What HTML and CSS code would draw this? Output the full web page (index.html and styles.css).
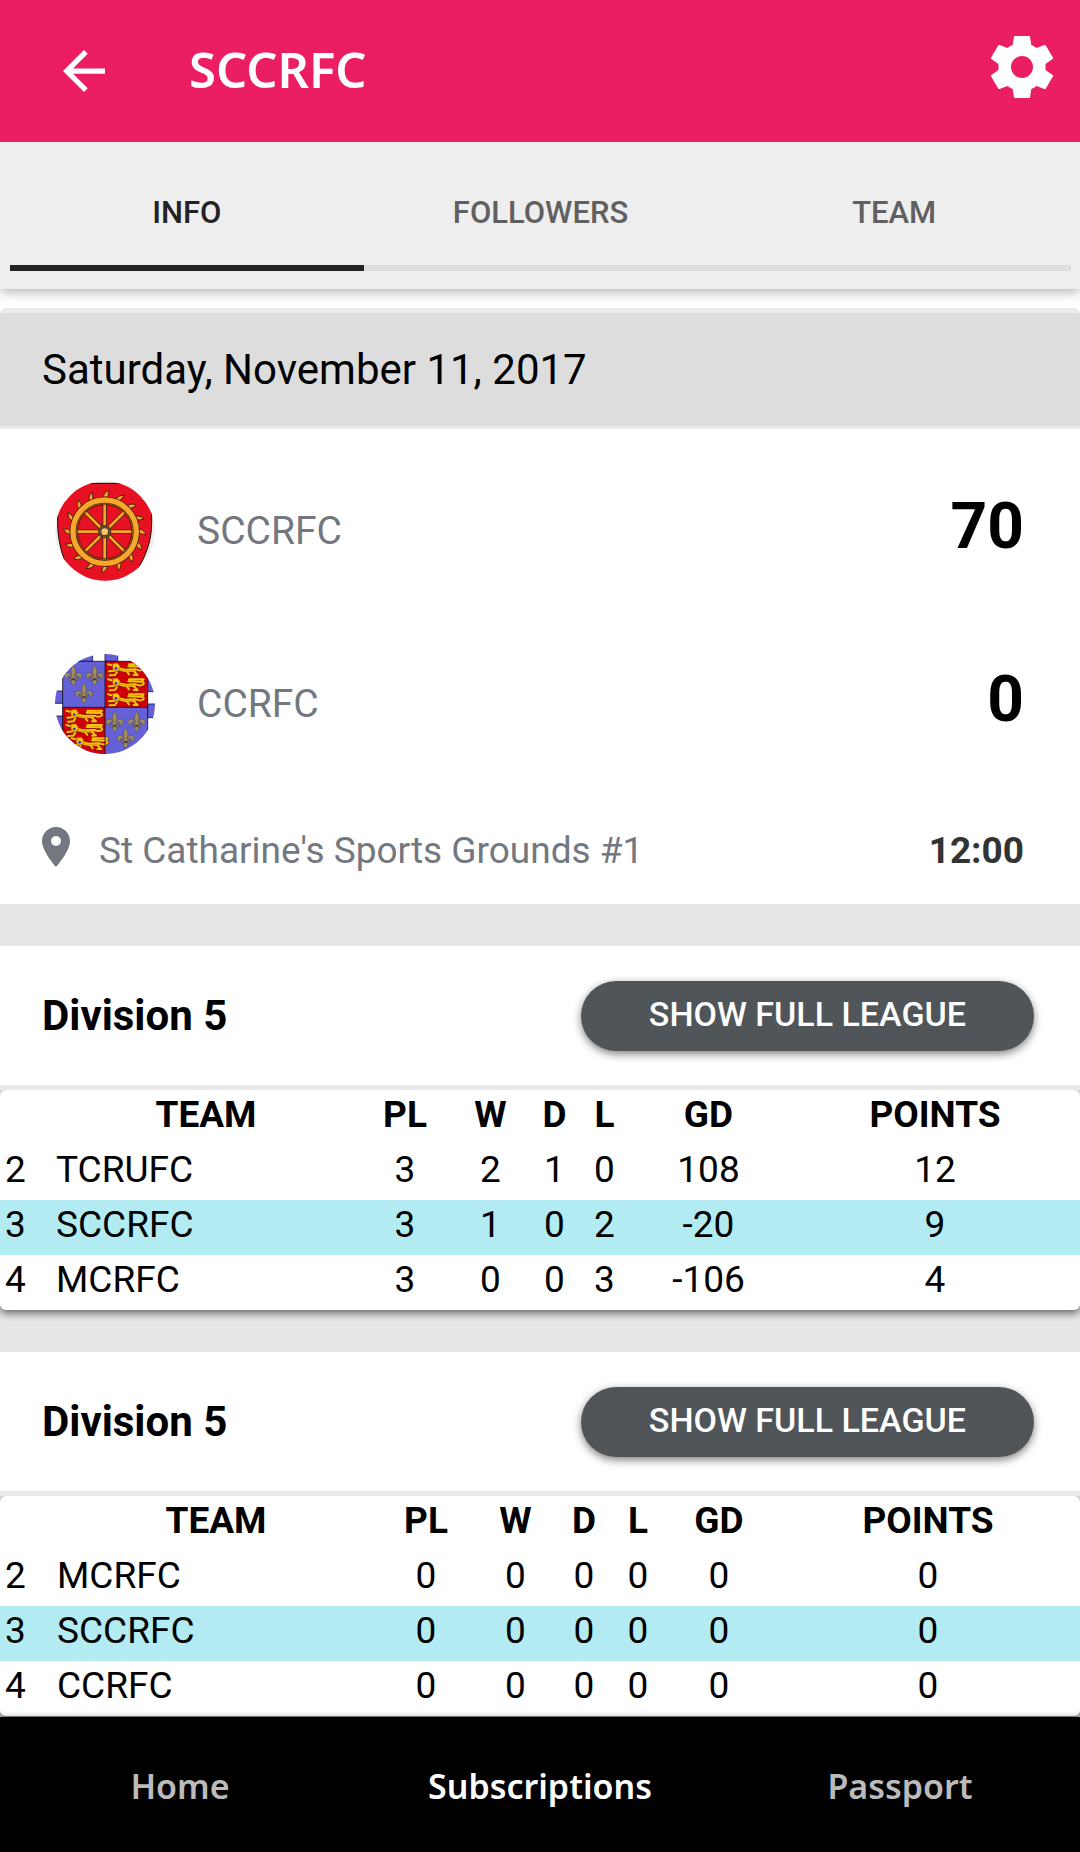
FILE: index.html
```html
<!DOCTYPE html>
<html lang="en">
<head>
<meta charset="utf-8">
<meta name="viewport" content="width=device-width, initial-scale=1">
<title>SCCRFC</title>
<link rel="stylesheet" href="styles.css">
</head>
<body>
<header class="topbar">
  <button class="icon-button" type="button" aria-label="Back">
    <svg class="icon-back" viewBox="4 4 16 16" aria-hidden="true"><path d="M20 11H7.83l5.59-5.59L12 4l-8 8 8 8 1.41-1.41L7.83 13H20z"/></svg>
  </button>
  <h1 class="topbar-title">SCCRFC</h1>
  <button class="icon-button" type="button" aria-label="Settings">
    <svg class="icon-gear" viewBox="-31 -31 62 62" aria-hidden="true"><path fill-rule="evenodd" d="M-7.3-31H7.3Q8-31 8.1-30L9.3-22Q12-21 14.5-19L22.4-22Q23.3-22.300 23.800-21.500L31-9.200Q31.300-8.400 30.600-7.900L23.500-3V3L30.600 7.900Q31.300 8.400 31 9.200L23.800 21.500Q23.300 22.300 22.400 22L14.500 19Q12 21 9.300 22L8.100 30Q8 31 7.300 31H-7.300Q-8 31-8.100 30L-9.300 22Q-12 21-14.500 19L-22.400 22Q-23.300 22.300-23.800 21.500L-31 9.200Q-31.300 8.400-30.600 7.900L-23.500 3V-3L-30.600-7.900Q-31.300-8.400-31-9.200L-23.800-21.500Q-23.300-22.300-22.400-22L-14.500-19Q-12-21-9.300-22L-8.100-30Q-8-31-7.300-31ZM0-11A11 11 0 1 0 0 11A11 11 0 1 0 0-11Z"/></svg>
  </button>
</header>

<div class="tabs" role="tablist">
  <button class="tab tab-active" type="button" role="tab" aria-selected="true">INFO</button>
  <button class="tab" type="button" role="tab" aria-selected="false">FOLLOWERS</button>
  <button class="tab" type="button" role="tab" aria-selected="false">TEAM</button>
</div>

<main class="content">
  <section class="fixture">
    <h2 class="fixture-date">Saturday, November 11, 2017</h2>
    <div class="fixture-body">
      <div class="side">
        <svg class="crest" viewBox="45 63 300 300" aria-hidden="true">
          <defs>
            <clipPath id="round1"><circle cx="195" cy="213" r="149"/></clipPath>
            <path id="flame" d="M-9-104C-5-112-3-120 10-123C5-116 10-111 3-104Z" fill="#f9a72b" stroke="#3a1d08" stroke-width="2.500"/>
          </defs>
          <g clip-path="url(#round1)">
            <path fill="#ececec" d="M45 63h300v300H45z"/>
            <path fill="#e81123" stroke="#1c0606" stroke-width="3" d="M53 70H335V190C335 240 318 290 288 335V370H105C72 310 53 250 53 190Z"/>
            <g transform="translate(194 215)">
              <use href="#flame" transform="rotate(2)"/><use href="#flame" transform="rotate(24)"/><use href="#flame" transform="rotate(46)"/><use href="#flame" transform="rotate(68)"/>
              <use href="#flame" transform="rotate(90)"/><use href="#flame" transform="rotate(112)"/><use href="#flame" transform="rotate(134)"/><use href="#flame" transform="rotate(157)"/>
              <use href="#flame" transform="rotate(180)"/><use href="#flame" transform="rotate(202)"/><use href="#flame" transform="rotate(225)"/><use href="#flame" transform="rotate(248)"/>
              <use href="#flame" transform="rotate(270)"/><use href="#flame" transform="rotate(293)"/><use href="#flame" transform="rotate(316)"/><use href="#flame" transform="rotate(338)"/>
              <path stroke="#4a2708" stroke-width="13" d="M0-84V84M-84 0H84M-59-59L59 59M59-59L-59 59"/>
              <path stroke="#f9a72b" stroke-width="8" d="M0-84V84M-84 0H84M-59-59L59 59M59-59L-59 59"/>
              <circle r="94" fill="none" stroke="#3a1d08" stroke-width="22"/>
              <circle r="95" fill="none" stroke="#f9a72b" stroke-width="16"/>
              <circle r="84" fill="none" stroke="#b5761d" stroke-width="2"/>
              <circle r="81" fill="none" stroke="#3a1d08" stroke-width="2"/>
              <circle r="20" fill="#4b3b26"/>
              <circle r="15" fill="none" stroke="#86683c" stroke-width="2"/>
              <circle r="10" fill="#fec368"/>
            </g>
          </g>
        </svg>
        <span class="side-name">SCCRFC</span>
        <strong class="side-score">70</strong>
      </div>
      <div class="side">
        <svg class="crest" viewBox="45 42 300 300" aria-hidden="true">
          <defs>
            <clipPath id="round2"><circle cx="195" cy="192" r="150"/></clipPath>
            <g id="fleur">
              <path fill="#a18c62" stroke="#4a4234" stroke-width="1.500" d="M0-30C10-18 7-8 4 4C8-12 24-11 26 1C26 9 18 11 14 6C17 5 16 0 12 1C7 3 7 7 6 9H12V15H5C6 20 8 22 4 26L0 30L-4 26C-8 22-6 20-5 15H-12V9H-6C-7 7-7 3-12 1C-16 0-17 5-14 6C-18 11-26 9-26 1C-24-11-8-12-4 4C-7-8-10-18 0-30Z"/>
              <path fill="#45413d" d="M-6 9H6V15H-6Z"/>
            </g>
            <g id="lion">
              <g fill="none" stroke-linecap="round" stroke-linejoin="round">
                <g stroke="#7d1a00">
                  <path stroke-width="14" d="M27-4L54 3L82 2"/>
                  <path stroke-width="9" d="M24 4L6 6M30 8L24 17L8 18M80 6L92 17H80M60 7L66 15M86 0C108 9 118-5 104-8L64-9M104-8L110-15H66M14-12L3-15"/>
                </g>
                <g stroke="#fcc10e">
                  <path stroke-width="10" d="M27-4L54 3L82 2"/>
                  <path stroke-width="6" d="M24 4L6 6M30 8L24 17L8 18M80 6L92 17H80M60 7L66 15M86 0C108 9 118-5 104-8L64-9M104-8L110-15H66M14-12L3-15"/>
                </g>
                <path stroke="#b66b04" stroke-width="1.500" d="M40 0L56 5L80 3"/>
              </g>
              <path fill="#fcc10e" stroke="#9d4b00" stroke-width="1.500" d="M17-17L31-19L39-10L36 3L27 6L17-1Z"/>
              <circle cx="27" cy="-3" r="4" fill="#2439d8"/>
            </g>
          </defs>
          <g clip-path="url(#round2)">
            <path fill="#fff" d="M45 42h300v300H45z"/>
            <path fill="#6461d8" stroke="#17173c" stroke-width="2.500" d="M90 30H158V64H90ZM195 30H233V64H195ZM30 153H68V190H30ZM30 228H68V270H30ZM323 116H360V155H323ZM323 192H360V233H323Z"/>
            <path fill="#6461d8" d="M68 64H323V350H68Z"/>
            <path fill="#d00009" d="M195 64H323V202H195ZM68 202H195V350H68Z"/>
            <use href="#fleur" x="100" y="106"/><use href="#fleur" x="164" y="106"/><use href="#fleur" x="132" y="160"/>
            <use href="#fleur" x="224" y="245"/><use href="#fleur" x="290" y="245"/><use href="#fleur" x="257" y="294"/>
            <use href="#lion" x="201" y="88"/><use href="#lion" x="201" y="133"/><use href="#lion" x="201" y="178"/>
            <use href="#lion" x="76" y="227"/><use href="#lion" x="76" y="270"/><use href="#lion" x="92" y="310"/>
            <path fill="none" stroke="#111128" stroke-width="2.500" d="M68 64H323V350M68 64V350M195 64V350M68 202H323"/>
          </g>
        </svg>
        <span class="side-name">CCRFC</span>
        <strong class="side-score">0</strong>
      </div>
      <div class="venue">
        <svg class="icon-pin" viewBox="5 2 14 20" aria-hidden="true"><path fill-rule="evenodd" d="M12 2C8.130 2 5 5.130 5 9c0 5.250 7 13 7 13s7-7.750 7-13c0-3.870-3.130-7-7-7zm0 9.500a2.500 2.500 0 0 1 0-5 2.500 2.500 0 0 1 0 5z"/></svg>
        <span class="venue-name">St Catharine's Sports Grounds #1</span>
        <time class="venue-time">12:00</time>
      </div>
    </div>
  </section>

  <section class="league">
    <div class="league-head">
      <h2 class="league-title">Division 5</h2>
      <button class="league-button" type="button">SHOW FULL LEAGUE</button>
    </div>
    <div class="standings-card">
      <table class="standings standings-played">
        <colgroup><col class="c-rank"><col class="c-team"><col class="c-pl"><col class="c-w"><col class="c-d"><col class="c-l"><col class="c-gd"><col class="c-points"></colgroup>
        <thead><tr><td></td><th scope="col">TEAM</th><th scope="col">PL</th><th scope="col">W</th><th scope="col">D</th><th scope="col">L</th><th scope="col">GD</th><th scope="col">POINTS</th></tr></thead>
        <tbody>
          <tr><td class="rank">2</td><td class="team">TCRUFC</td><td>3</td><td>2</td><td>1</td><td>0</td><td>108</td><td>12</td></tr>
          <tr class="current"><td class="rank">3</td><td class="team">SCCRFC</td><td>3</td><td>1</td><td>0</td><td>2</td><td>-20</td><td>9</td></tr>
          <tr><td class="rank">4</td><td class="team">MCRFC</td><td>3</td><td>0</td><td>0</td><td>3</td><td>-106</td><td>4</td></tr>
        </tbody>
      </table>
    </div>
  </section>

  <section class="league">
    <div class="league-head">
      <h2 class="league-title">Division 5</h2>
      <button class="league-button" type="button">SHOW FULL LEAGUE</button>
    </div>
    <div class="standings-card">
      <table class="standings standings-new">
        <colgroup><col class="c-rank"><col class="c-team"><col class="c-pl"><col class="c-w"><col class="c-d"><col class="c-l"><col class="c-gd"><col class="c-points"></colgroup>
        <thead><tr><td></td><th scope="col">TEAM</th><th scope="col">PL</th><th scope="col">W</th><th scope="col">D</th><th scope="col">L</th><th scope="col">GD</th><th scope="col">POINTS</th></tr></thead>
        <tbody>
          <tr><td class="rank">2</td><td class="team">MCRFC</td><td>0</td><td>0</td><td>0</td><td>0</td><td>0</td><td>0</td></tr>
          <tr class="current"><td class="rank">3</td><td class="team">SCCRFC</td><td>0</td><td>0</td><td>0</td><td>0</td><td>0</td><td>0</td></tr>
          <tr><td class="rank">4</td><td class="team">CCRFC</td><td>0</td><td>0</td><td>0</td><td>0</td><td>0</td><td>0</td></tr>
        </tbody>
      </table>
    </div>
  </section>
</main>

<nav class="bottom-nav">
  <a class="nav-link" href="#home">Home</a>
  <a class="nav-link nav-link-active" href="#subscriptions" aria-current="page">Subscriptions</a>
  <a class="nav-link" href="#passport">Passport</a>
</nav>
</body>
</html>
```
FILE: styles.css
```css
* {
  box-sizing: border-box;
}

body {
  margin: 0;
  min-height: 100vh;
  display: flex;
  flex-direction: column;
  background: #e5e6e8;
  color: #000;
  font-family: Roboto, "Liberation Sans", sans-serif;
  font-size: 37px;
  line-height: 42px;
}

h1,
h2 {
  margin: 0;
}

button {
  border: 0;
  padding: 0;
  background: none;
  color: inherit;
  font: inherit;
}

svg {
  display: block;
}

/* Top bar */
.topbar {
  position: relative;
  z-index: 2;
  display: flex;
  align-items: center;
  height: 142px;
  padding: 0 27px 0 63px;
  background: #eb1e63;
  color: #fff;
}

.topbar svg {
  fill: #fff;
}

.icon-back {
  width: 42px;
  height: 42px;
}

.icon-gear {
  width: 62px;
  height: 62px;
  margin-bottom: 8px;
}

.topbar-title {
  flex: 1;
  padding: 0 0 4px 84px;
  font-family: "Noto Sans", "Open Sans", sans-serif;
  font-size: 49px;
  font-weight: 600;
  line-height: 60px;
}

/* Tabs */
.tabs {
  position: relative;
  z-index: 1;
  display: flex;
  padding: 0 9px 18px 10px;
  background: #eee;
  box-shadow: 0 2px 12px rgba(0, 0, 0, 0.35);
}

.tab {
  flex: 1;
  height: 129px;
  padding-top: 18px;
  border-bottom: 6px solid #dedede;
  color: #606060;
  font-size: 31px;
  font-weight: 500;
}

.tab-active {
  border-color: #222;
  color: #222;
}

/* Fixture */
.fixture {
  padding-top: 19px;
  background: #fff;
}

.fixture-date {
  padding: 33px 42px 32px;
  border-top: 5px solid #ebebeb;
  border-bottom: 3px solid #e8e8e8;
  border-radius: 6px 6px 0 0;
  background: #ddd;
  font-size: 42px;
  font-weight: 400;
  line-height: 48px;
}

.fixture-body {
  padding: 15px 56px 0 42px;
}

.side {
  display: flex;
  align-items: center;
  height: 173px;
  padding-left: 13px;
}

.crest {
  width: 100px;
  height: 100px;
}

.side-name {
  flex: 1;
  padding-left: 42px;
  color: #727780;
  font-size: 39px;
}

.side-score {
  padding-bottom: 8px;
  font-size: 64px;
  line-height: 72px;
}

.venue {
  display: flex;
  align-items: center;
  height: 114px;
  padding-top: 8px;
}

.icon-pin {
  width: 28px;
  height: 40px;
  margin-bottom: 8px;
  fill: #727780;
}

.venue-name {
  flex: 1;
  padding-left: 29px;
  color: #727780;
}

.venue-time {
  color: #333;
  font-weight: 700;
}

/* League */
.league {
  margin-top: 42px;
}

.league-head {
  display: flex;
  align-items: center;
  justify-content: space-between;
  height: 144px;
  padding: 0 46px 0 42px;
  border-bottom: 5px solid #eaeaea;
  background: #fff;
}

.league-title {
  font-size: 42px;
  font-weight: 700;
  line-height: 48px;
}

.league-button {
  height: 70px;
  padding: 0 68px 4px;
  border-radius: 35px;
  background: #505559;
  box-shadow: 0 3px 8px rgba(0, 0, 0, 0.5);
  color: #fff;
  font-size: 34px;
  font-weight: 500;
}

.standings-card {
  overflow: hidden;
  border-radius: 6px;
  background: #fff;
  box-shadow: 0 3px 8px rgba(0, 0, 0, 0.6);
  clip-path: inset(0 0 -20px 0);
}

.standings {
  width: 100%;
  border-collapse: collapse;
  table-layout: fixed;
  text-align: center;
}

.standings th,
.standings td {
  height: 55px;
  padding: 4px 0 9px;
}

.standings .rank {
  padding-left: 5px;
  text-align: left;
}

.standings .team {
  text-align: left;
}

.current {
  background: #b2ebf2;
}

.standings-played .c-rank { width: 56px; }
.standings-played .c-team { width: 300px; }
.standings-played .c-pl { width: 98px; }
.standings-played .c-w { width: 73px; }
.standings-played .c-d { width: 55px; }
.standings-played .c-l { width: 45px; }
.standings-played .c-gd { width: 163px; }
.standings-played .c-points { width: 290px; }

.standings-new .c-rank { width: 57px; }
.standings-new .c-team { width: 318px; }
.standings-new .c-pl { width: 102px; }
.standings-new .c-w { width: 77px; }
.standings-new .c-d { width: 60px; }
.standings-new .c-l { width: 48px; }
.standings-new .c-gd { width: 114px; }
.standings-new .c-points { width: 304px; }

/* Bottom navigation */
.bottom-nav {
  position: relative;
  z-index: 1;
  display: flex;
  margin-top: auto;
  background: #000;
  box-shadow: 0 -1px 5px rgba(0, 0, 0, 0.25);
}

.nav-link {
  flex: 1;
  padding: 48px 0 45px;
  color: #bbb;
  font-family: "Noto Sans", "Open Sans", sans-serif;
  font-size: 34px;
  font-weight: 600;
  text-align: center;
  text-decoration: none;
}

.nav-link-active {
  color: #fff;
}
```
